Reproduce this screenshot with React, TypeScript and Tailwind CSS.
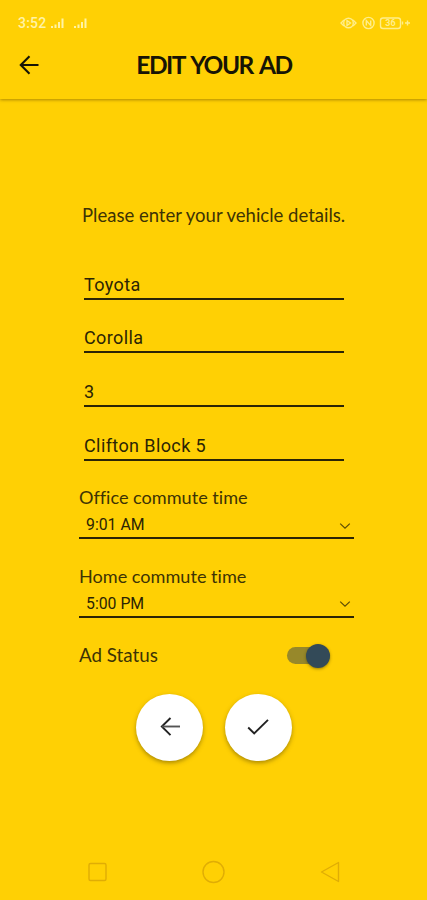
import React, { ReactNode } from "react";

type FieldProps = {
  value: string;
};
type TimeSelectProps = {
  label: string;
  value: string;
};
type RoundButtonProps = {
  label: string;
  children: ReactNode;
};

const lato = "font-['Lato',sans-serif]";
const roboto = "font-['Roboto',sans-serif]";

const Field = ({ value }: FieldProps) => {
  return (
    <div className="mb-[21.75px] ml-[5px] flex h-8 w-[260px] items-end border-b-2 border-[#2b2405]">
      <span
        className={`${roboto} pb-[3px] text-[18px] leading-[21px] tracking-[0.4px] whitespace-nowrap text-[#2b2405]`}
      >
        {value}
      </span>
    </div>
  );
};

const TimeSelect = ({ label, value }: TimeSelectProps) => {
  return (
    <div className="mb-[24.75px] h-[54px] border-b-2 border-[#2b2405]">
      <div
        className={`${lato} h-[28px] text-[18.1px] leading-[24px] whitespace-nowrap text-[#3d3305] [font-variant-ligatures:none]`}
      >
        {label}
      </div>
      <div className="flex h-[24px] items-center justify-between pr-[3px] pl-[7px]">
        <span
          className={`${roboto} text-[15.8px] leading-[22px] whitespace-nowrap text-[#2b2405]`}
        >
          {value}
        </span>
        <svg
          className="mt-[1px] h-3 w-3"
          viewBox="0 0 12 12"
          fill="none"
          stroke="#5c4c05"
          strokeWidth="1.2"
        >
          <path d="M1.2 3.6 6 8.2l4.8-4.6" />
        </svg>
      </div>
    </div>
  );
};

const RoundButton = ({ label, children }: RoundButtonProps) => {
  return (
    <button
      aria-label={label}
      className="flex h-[67px] w-[67px] items-center justify-center rounded-full bg-white shadow-[0_2px_4px_rgba(90,70,0,0.5)]"
    >
      {children}
    </button>
  );
};

const Signal = () => {
  return (
    <svg className="h-3 w-[15px]" viewBox="0 0 15 12" fill="#fff3a6">
      <path d="M1 9h2v2H1zM4.5 7.5h2V11h-2zM8 5h2v6H8zM11.5 1.5h2V11h-2z" />
    </svg>
  );
};

const StatusBar = () => {
  return (
    <div className="flex h-[32px] items-center pt-[13px] pr-4 pl-[18px]">
      <span
        className={`${roboto} w-[32px] text-[14px] leading-4 font-medium tracking-[0.2px] text-[#fff3a6]`}
      >
        3:52
      </span>
      <Signal />
      <div className="ml-[8px] flex">
        <Signal />
      </div>
      <svg
        className="ml-auto h-[14px] w-[72px]"
        viewBox="0 0 72 14"
        fill="none"
        stroke="#ffee8c"
        strokeWidth="1.4"
      >
        <path d="M5 4 2 7l3 3M14 4l3 3-3 3" />
        <circle cx="9.5" cy="7" r="4.8" />
        <path d="M8 4.5v5l3.5-2.5z" />
        <circle cx="29.5" cy="7" r="5.6" />
        <path d="M27.3 9.5v-5l4.4 5v-5" />
        <rect x="41.5" y="2" width="20" height="10.5" rx="2.5" />
        <path d="M63.5 5.5v3M66 7h5M68.5 4.5v5" />
        <text
          x="51.5"
          y="10.2"
          textAnchor="middle"
          fontFamily="Roboto, sans-serif"
          fontSize="9"
          fontWeight="700"
          fill="#ffee8c"
          stroke="none"
        >
          36
        </text>
      </svg>
    </div>
  );
};

export default function App() {
  return (
    <div className="flex h-[900px] w-[427px] flex-col overflow-hidden bg-[#ffd004]">
      <header className="h-[99px] shrink-0 shadow-[0_1px_3px_rgba(110,80,0,0.55)]">
        <StatusBar />
        <div className="grid h-[66px] grid-cols-[60px_1fr_60px] items-center">
          <svg
            className="ml-[19px] h-5 w-5"
            viewBox="0 0 20 20"
            fill="none"
            stroke="#171405"
            strokeWidth="2.1"
          >
            <path d="M19.5 10H2M10.5 1.3 1.8 10l8.7 8.7" />
          </svg>
          <h1
            className={`${lato} pl-[1px] text-center text-[24.5px] leading-8 font-bold tracking-[-1.5px] whitespace-nowrap text-[#171405] [word-spacing:2.5px]`}
          >
            EDIT YOUR AD
          </h1>
        </div>
      </header>

      <main className="ml-[79px] w-[275px] shrink-0">
        <p
          className={`${lato} mt-[104px] mb-[40.5px] h-6 pl-[3px] text-[18.5px] leading-6 whitespace-nowrap text-[#3d3305]`}
        >
          Please enter your vehicle details.
        </p>
        <Field value="Toyota" />
        <Field value="Corolla" />
        <Field value="3" />
        <Field value="Clifton Block 5" />
        <div className="pt-[2.5px]">
          <TimeSelect label="Office commute time" value="9:01 AM" />
          <TimeSelect label="Home commute time" value="5:00 PM" />
        </div>
        <div className="flex h-6 items-center justify-between">
          <span
            className={`${lato} text-[18.8px] leading-6 whitespace-nowrap text-[#3d3305]`}
          >
            Ad Status
          </span>
          <div className="mt-[2px] mr-[24px] flex h-[17px] w-[43px] items-center justify-end rounded-full bg-[#97882a]">
            <div className="h-6 w-6 shrink-0 rounded-full bg-[#334a58] shadow-[0_1px_3px_rgba(60,50,0,0.5)]" />
          </div>
        </div>
      </main>

      <div className="mt-[27px] flex shrink-0 justify-center gap-[22px]">
        <RoundButton label="Back">
          <svg
            className="ml-[2px] h-5 w-5"
            viewBox="0 0 20 20"
            fill="none"
            stroke="#222"
            strokeWidth="1.9"
          >
            <path d="M10.5 1 1.8 9.5l8.7 8.7" />
            <path d="M2 9.5h18" stroke="#555" />
          </svg>
        </RoundButton>
        <RoundButton label="Confirm">
          <svg
            className="h-[22px] w-[22px]"
            viewBox="0 0 22 22"
            fill="none"
            stroke="#222"
            strokeWidth="1.9"
          >
            <path d="m1.2 11.5 6 6L21 3.8" />
          </svg>
        </RoundButton>
      </div>

      <nav className="mt-auto mb-[16px] flex h-6 items-center justify-between pr-[85px] pl-[87px]">
        <svg
          className="h-[22px] w-[22px]"
          viewBox="0 0 22 22"
          fill="none"
          stroke="#e0ad05"
          strokeWidth="1.4"
        >
          <rect x="2" y="2.5" width="17" height="17" rx="1.5" />
        </svg>
        <svg
          className="mr-[1px] h-6 w-6"
          viewBox="0 0 24 24"
          fill="none"
          stroke="#e0ad05"
          strokeWidth="1.4"
        >
          <circle cx="11.5" cy="12" r="10.5" />
        </svg>
        <svg
          className="h-[22px] w-[22px]"
          viewBox="0 0 22 22"
          fill="none"
          stroke="#e0ad05"
          strokeWidth="1.4"
          strokeLinejoin="round"
        >
          <path d="M18.5 1.5v19L1.5 11z" />
        </svg>
      </nav>
    </div>
  );
}
